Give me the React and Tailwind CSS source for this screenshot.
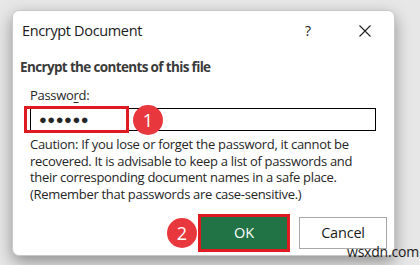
const font = { fontFamily: '"Open Sans", "Noto Sans", sans-serif' };

const CloseIcon = () => (
  <svg width="12" height="12" viewBox="0 0 12 12" className="block">
    <path d="M0.5 0.5 L11.5 11.5 M11.5 0.5 L0.5 11.5" stroke="#1f1f1f" strokeWidth="1.1" fill="none" />
  </svg>
);

const StepBadge = ({ n, className }) => (
  <div
    className={`absolute w-[30px] h-[30px] rounded-full bg-[#e8383d] text-white flex items-center justify-center text-[18px] leading-none ${className}`}
  >
    {n}
  </div>
);

const App = () => {
  return (
    <div
      className="relative w-[420px] h-[265px] overflow-hidden bg-[#e7e7e7] pl-[12px] pt-[10px]"
      style={font}
    >
      {/* Dialog */}
      <div className="w-[383px] h-[246px] bg-white rounded-[7px] border border-[#c9c9c9] shadow-[0_6px_16px_rgba(0,0,0,0.38)] flex flex-col text-[#262626]">
        {/* Title bar */}
        <div className="h-[39px] flex items-center pl-[9px] shrink-0">
          <span className="text-[14.5px] tracking-[-0.35px] text-[#1a1a1a]">Encrypt Document</span>
          <span className="ml-auto text-[14px] text-[#1a1a1a] mr-[48px]">?</span>
          <span className="mr-[23px]"><CloseIcon /></span>
        </div>

        {/* Heading */}
        <div className="mt-[7px] pl-[7px] text-[13.5px] tracking-[-0.65px] leading-[20px] font-bold text-[#3a3a3a]">
          Encrypt the contents of this file
        </div>

        {/* Password */}
        <div className="mt-[9px] pl-[17px] text-[13px] tracking-[-0.3px] leading-[18px]">
          Passwo<span className="underline underline-offset-2">r</span>d:
        </div>
        <div className="relative mt-[4px] ml-[17px] w-[346px] h-[23px] border border-black flex items-center pl-[8px]">
          <span className="text-[13px] tracking-[0.5px] leading-none">●●●●●●</span>
          <div className="absolute left-[-7px] top-[-3px] w-[105px] h-[27px] border-[3px] border-[#df1b22]" />
          <StepBadge n="1" className="left-[102px] top-[-4px]" />
        </div>

        {/* Caution */}
        <p className="mt-[5px] pl-[17px] pr-[8px] text-[13px] tracking-[-0.3px] leading-[16.7px]">
          Caution: If you lose or forget the password, it cannot be
          <br />
          recovered. It is advisable to keep a list of passwords and
          <br />
          their corresponding document names in a safe place.
          <br />
          (Remember that passwords are case-sensitive.)
        </p>

        {/* Buttons */}
        <div className="mt-auto mb-[6px] flex justify-end gap-[12px] pr-[7px]">
          <div className="relative">
            <StepBadge n="2" className="left-[-34px] top-[1px]" />
            <button className="w-[86px] h-[32px] bg-[#217346] text-white text-[14.5px] outline-3 outline-[#df1b22]">
              OK
            </button>
          </div>
          <button className="w-[88px] h-[32px] bg-white border border-[#a8a8a8] text-[14.5px] tracking-[-0.2px] text-[#1a1a1a]">
            Cancel
          </button>
        </div>
      </div>

      {/* Watermark */}
      <div className="absolute left-[347px] top-[244px] text-[14px] tracking-[-0.2px] leading-[16px] text-[#1a1a1a]">
        wsxdn.com
      </div>
    </div>
  );
};

export default App;
